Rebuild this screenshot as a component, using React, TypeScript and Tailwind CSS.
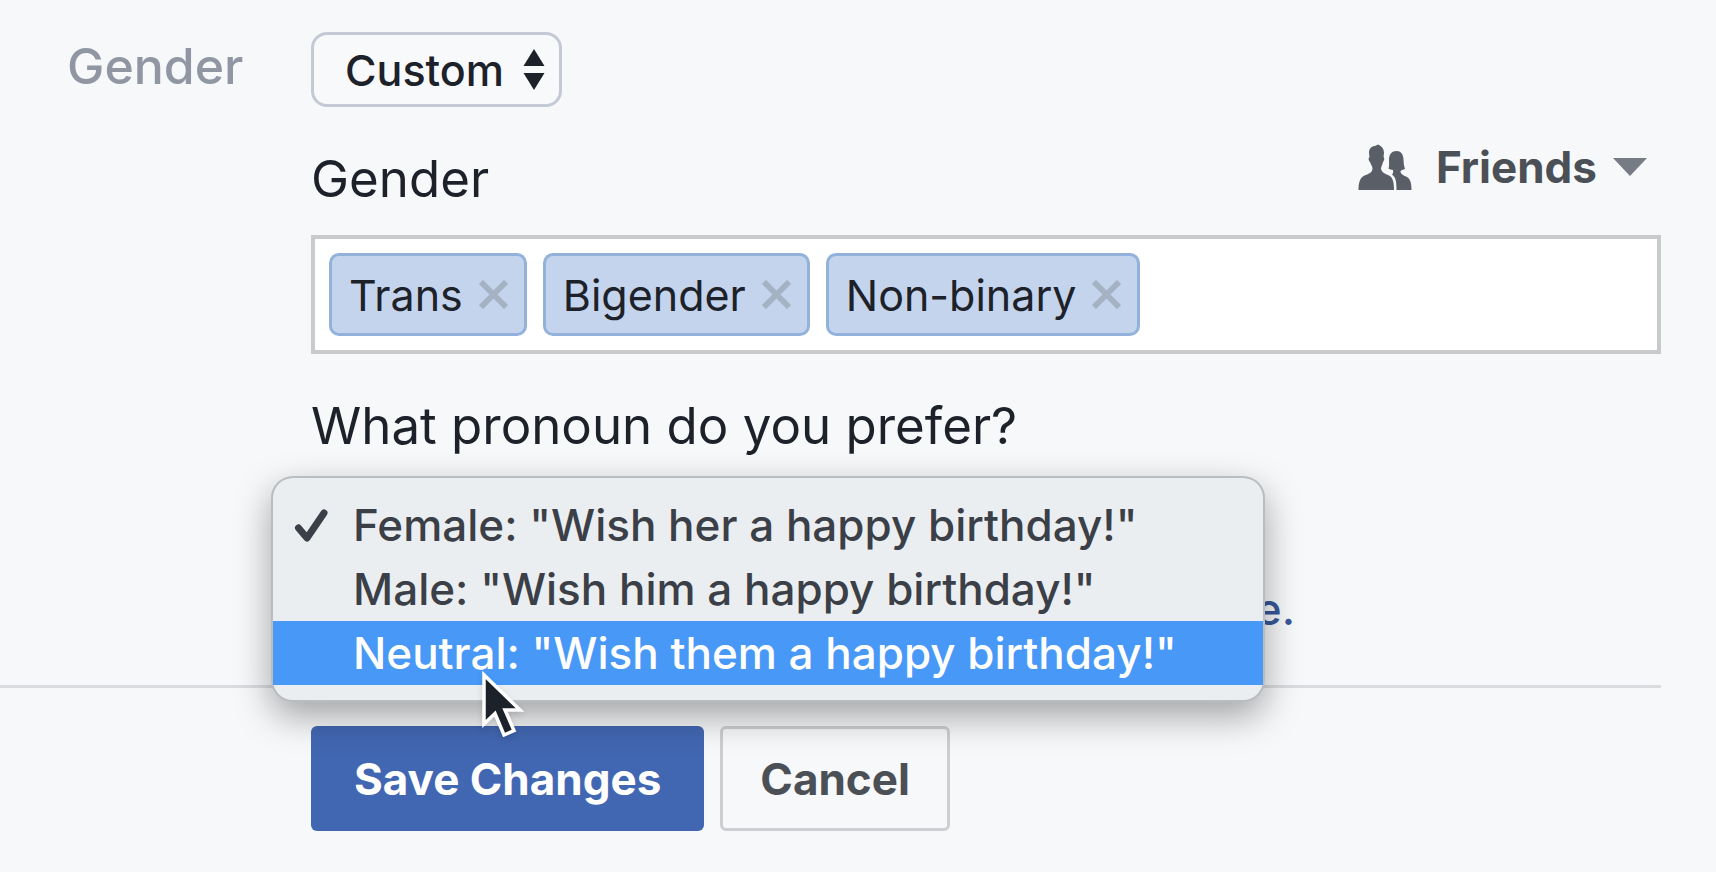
import React, { useState } from 'react';

const PRONOUNS = [
  { value: 'female', label: 'Female: "Wish her a happy birthday!"' },
  { value: 'male', label: 'Male: "Wish him a happy birthday!"' },
  { value: 'neutral', label: 'Neutral: "Wish them a happy birthday!"' },
];

function FriendsIcon() {
  return (
    <svg className="h-[46px] w-[54px] shrink-0" viewBox="0 0 54 46" fill="#5a5e66" aria-hidden="true">
      <path d="M11 9C11 4 14 2 17 2L20 0.5C23 2 26 4 26 9L25.500 13C27 14 26 17 25 18C24.500 21 23 22 23 25C24 29 28 30 31 31.500C34.500 33.500 36 37 36 46H0.500C0.500 37 3 33 6.500 31.500C10 30 14 29 14.500 25C14.500 22 13 21 12 18C10.500 17 10 14 11.500 13Z" />
      <path d="M31 16C31 10 34 7 38.500 7C43 7 45 10 45.500 15C45.500 19 46 22 47 25C45 26 43 26 42.500 27C42.500 30 45 31 48 32.500C52 34.500 53.500 38 53.500 46H38.500C38.500 38 38 33.500 34 30.500C35 29.500 35.500 28 35 26C33 26 31.500 25 30.500 24.500C31.500 22 31 19 31 16Z" />
    </svg>
  );
}

function Cursor() {
  return (
    <svg className="h-[70px] w-[46px] drop-shadow-md" viewBox="0 0 46 70" aria-hidden="true">
      <path
        d="M3 5V54L14 43.500L23 65L33 60.500L24 40H39Z"
        fill="#1d2129"
        stroke="#ffffff"
        strokeWidth="3.500"
      />
    </svg>
  );
}

export default function App() {
  const [genders, setGenders] = useState(['Trans', 'Bigender', 'Non-binary']);
  const [pronoun, setPronoun] = useState('female');
  const [active, setActive] = useState('neutral');

  return (
    <form
      className="min-h-screen overflow-hidden bg-[#f6f8fa] pt-8 pr-[55px] font-['Inter',sans-serif] text-[#1d2129]"
      onSubmit={(e) => e.preventDefault()}
    >
      <div className="flex">
        <label htmlFor="gender" className="w-[311px] shrink-0 pl-[67px] text-[50px] leading-[68px] font-medium text-[#9097a3]">
          Gender
        </label>

        <div className="min-w-0 flex-1">
          {/* Gender select */}
          <div className="relative w-[251px]">
            <select
              id="gender"
              defaultValue="custom"
              className="h-[75px] w-full appearance-none rounded-2xl border-3 border-[#c3cad6] bg-[#f8f9fb] pl-[31px] text-[43px] leading-[64px] font-medium"
            >
              <option value="custom">Custom</option>
            </select>
            <svg className="pointer-events-none absolute top-4 right-4 h-11 w-6" viewBox="0 0 24 44" fill="#1d2129" aria-hidden="true">
              <path d="M12 1L22.500 18H1.500Z M1.500 25H22.500L12 42Z" />
            </svg>
          </div>

          {/* Custom gender */}
          <div className="mt-7 flex items-start justify-between">
            <h2 className="mt-3 text-[51px] leading-[64px]">Gender</h2>
            <button type="button" className="mr-[14px] flex items-center text-[44px] leading-[64px] font-bold text-[#4b4f56]">
              <FriendsIcon />
              <span className="ml-6">Friends</span>
              <svg className="ml-4 h-5 w-[34px]" viewBox="0 0 34 20" fill="#777b84" aria-hidden="true">
                <path d="M0 1H34L17 19Z" />
              </svg>
            </button>
          </div>

          <div className="mt-6 flex flex-wrap gap-4 border-4 border-[#c8cacc] bg-white p-[14px]">
            {genders.map((name) => (
              <span
                key={name}
                className="flex h-[83px] items-center rounded-[10px] border-3 border-[#92b2dc] bg-[#c4d4ec] pr-4 pl-[17px] text-[43px] leading-[64px]"
              >
                {name}
                <button
                  type="button"
                  aria-label={`Remove ${name}`}
                  className="ml-4"
                  onClick={() => setGenders(genders.filter((g) => g !== name))}
                >
                  <svg className="h-[29px] w-[29px]" viewBox="0 0 30 30" stroke="#a5b2c4" strokeWidth="6" aria-hidden="true">
                    <path d="M2 2L28 28M28 2L2 28" />
                  </svg>
                </button>
              </span>
            ))}
          </div>

          {/* Pronoun */}
          <label htmlFor="pronoun" className="mt-10 block text-[51px] leading-[64px]">
            What pronoun do you prefer?
          </label>
          <div className="relative h-[227px] w-[992px] pt-6">
            <select
              id="pronoun"
              value={pronoun}
              onChange={(e) => setPronoun(e.target.value)}
              className="block h-[75px] w-[900px] appearance-none rounded-2xl border-3 border-[#c3cad6] pl-[31px] text-[44px]"
            >
              {PRONOUNS.map((p) => (
                <option key={p.value} value={p.value}>{p.label}</option>
              ))}
            </select>
            <a href="#" className="mt-5 block pr-2 text-right text-[44px] leading-[64px] font-medium text-[#385898]">
              e.
            </a>

            <ul
              role="listbox"
              aria-label="Pronoun"
              className="absolute top-5 -left-[38px] z-10 w-[990px] rounded-[20px] bg-[#ebeef0] py-[15px] text-[44px] leading-[64px] font-medium text-[#3b3f47] shadow-[0_0_0_2px_#b9bcc0,0_14px_36px_2px_rgba(0,0,0,0.35)]"
            >
              {PRONOUNS.map((p) => (
                <li
                  key={p.value}
                  role="option"
                  aria-selected={p.value === pronoun}
                  onMouseEnter={() => setActive(p.value)}
                  onClick={() => setPronoun(p.value)}
                  className={`flex items-center pl-5 ${p.value === active ? 'bg-[#4898f7] text-white' : ''}`}
                >
                  <span className="w-[60px] shrink-0">
                    {p.value === pronoun && (
                      <svg className="h-9 w-9" viewBox="0 0 36 36" fill="none" stroke="#3b3f47" strokeWidth="7" strokeLinecap="round" strokeLinejoin="round" aria-hidden="true">
                        <path d="M5.500 21L14 31L31 6" />
                      </svg>
                    )}
                  </span>
                  {p.label}
                </li>
              ))}
            </ul>
            <div className="pointer-events-none absolute top-[212px] left-[170px] z-20">
              <Cursor />
            </div>
          </div>
        </div>
      </div>

      {/* Actions */}
      <div className="flex gap-4 border-t-3 border-[#dadcdf] pt-[38px] pb-10 pl-[311px] text-[44px] leading-[64px] font-bold">
        <button type="submit" className="h-[105px] rounded-md bg-[#4267b2] px-[43px] text-white">
          Save Changes
        </button>
        <button type="button" className="h-[105px] rounded-md border-3 border-[#ccced1] px-[37px] text-[#4b4f56]">
          Cancel
        </button>
      </div>
    </form>
  );
}
